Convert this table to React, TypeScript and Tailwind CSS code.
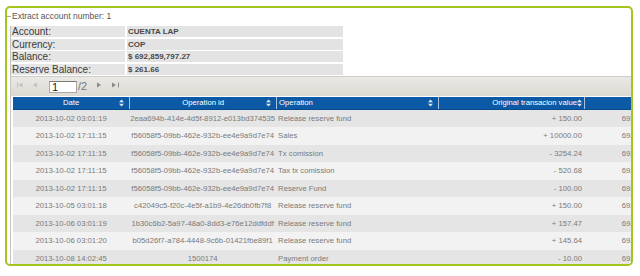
import React from "react";

const rows: string[][] = [
  ["2013-10-02 03:01:19", "2eaa694b-414e-4d5f-8912-e013bd374535", "Release reserve fund", "+ 150.00", "692,859,797.27"],
  ["2013-10-02 17:11:15", "f56058f5-09bb-462e-932b-ee4e9a9d7e74", "Sales", "+ 10000.00", "692,859,647.27"],
  ["2013-10-02 17:11:15", "f56058f5-09bb-462e-932b-ee4e9a9d7e74", "Tx comission", "- 3254.24", "692,849,647.27"],
  ["2013-10-02 17:11:15", "f56058f5-09bb-462e-932b-ee4e9a9d7e74", "Tax tx comission", "- 520.68", "692,852,901.51"],
  ["2013-10-02 17:11:15", "f56058f5-09bb-462e-932b-ee4e9a9d7e74", "Reserve Fund", "- 100.00", "692,853,422.19"],
  ["2013-10-05 03:01:18", "c42049c5-f20c-4e5f-a1b9-4e26db0fb7f8", "Release reserve fund", "+ 150.00", "692,853,522.19"],
  ["2013-10-06 03:01:19", "1b30c6b2-5a97-48a0-8dd3-e76e12ddfddf", "Release reserve fund", "+ 157.47", "692,853,372.19"],
  ["2013-10-06 03:01:20", "b05d26f7-a784-4448-9c6b-01421fbe89f1", "Release reserve fund", "+ 145.64", "692,853,214.72"],
  ["2013-10-08 14:02:45", "1500174", "Payment order", "- 10.00", "692,853,069.08"],
];

const info = [
  ["Account:", "CUENTA LAP"],
  ["Currency:", "COP"],
  ["Balance:", "$ 692,859,797.27"],
  ["Reserve Balance:", "$ 261.66"],
];

const Sort = () => (
  <svg width="5" height="8" viewBox="0 0 5 8" className="shrink-0">
    <path d="M2.5 0.5 L5 3.3 L0 3.3 Z" fill="#dce6f2" />
    <path d="M2.5 7.5 L5 4.7 L0 4.7 Z" fill="#dce6f2" />
  </svg>
);

const First = ({ c }: { c: string }) => (
  <svg width="6" height="6" viewBox="0 0 6 6">
    <rect x="0" y="0.5" width="1" height="5" fill={c} />
    <path d="M1.5 3 L5.5 0.5 L5.5 5.5 Z" fill={c} />
  </svg>
);

const Prev = ({ c }: { c: string }) => (
  <svg width="4" height="6" viewBox="0 0 4 6">
    <path d="M0 3 L4 0.5 L4 5.5 Z" fill={c} />
  </svg>
);

const Next = ({ c }: { c: string }) => (
  <svg width="4" height="6" viewBox="0 0 4 6">
    <path d="M4 3 L0 0.5 L0 5.5 Z" fill={c} />
  </svg>
);

const Last = ({ c }: { c: string }) => (
  <svg width="7" height="6" viewBox="0 0 7 6">
    <path d="M4 3 L0 0.5 L0 5.5 Z" fill={c} />
    <rect x="6" y="0.5" width="1" height="5" fill={c} />
  </svg>
);

export default function App() {
  return (
    <div className="w-[640px] h-[276px] bg-white overflow-hidden font-['Liberation_Sans',Arial,sans-serif]">
      <div className="ml-[5px] mt-[6px] w-[628px] h-[260px] border-2 border-[#a3c61c] rounded-[5px] overflow-hidden">
        <div className="flex items-center h-[12px] mt-[2px]">
          <span className="w-[4px] h-px bg-[#a8a8a8]" />
          <span className="ml-[1px] text-[8.5px] text-[#555] leading-none">Extract account number: 1</span>
        </div>
        <div className="ml-[3px] border-l border-[#c4c4c4] h-[300px]">
          <div className="mt-[4px] flex flex-col gap-[1.67px] w-[332px]">
            {info.map(([k, v]) => (
              <div key={k} className="flex h-[11px] gap-[2px]">
                <div className="w-[114px] bg-[#e5e5e5] text-[10px] leading-[11px] text-[#3a3a3a] pl-[1px]">{k}</div>
                <div className="w-[216px] bg-[#e3e3e3] text-[8px] font-bold leading-[11px] text-[#4a4a4a] pl-[1px]">{v}</div>
              </div>
            ))}
          </div>
          <div className="mt-[1px] h-[20px] bg-gradient-to-b from-[#ebe9e5] to-[#dcd9d3] border-t border-[#d0cdc7] flex items-center">
            <span className="ml-[6px] -mt-[2px] flex"><First c="#c2c2c2" /></span>
            <span className="ml-[10px] -mt-[2px] flex"><Prev c="#c2c2c2" /></span>
            <div className="ml-[12px] mt-[1px] w-[28px] h-[12px] bg-white border border-[#a9a9a9] border-t-[#7a7a7a] text-[11px] leading-[10px] text-[#222] pl-[2px]">1</div>
            <span className="ml-[1px] text-[11px] leading-none text-[#777]">/2</span>
            <span className="ml-[10px] -mt-[2px] flex"><Next c="#8a8a8a" /></span>
            <span className="ml-[11px] -mt-[2px] flex"><Last c="#8a8a8a" /></span>
          </div>
          <div className="ml-[2px] mt-[1px] w-[700px] text-[7.7px] leading-none">
            <div className="flex h-[13px] bg-[#0c5aa6] border-b border-[#084a8c] text-white items-center">
              <div className="w-[117px] relative flex items-center justify-center h-full">
                <span>Date</span>
                <span className="absolute right-[5px] top-[2.5px]"><Sort /></span>
              </div>
              <div className="w-[148px] relative flex items-center justify-center h-full border-l border-[#a9c2df]">
                <span>Operation id</span>
                <span className="absolute right-[5px] top-[2.5px]"><Sort /></span>
              </div>
              <div className="w-[163px] relative flex items-center h-full border-l border-[#a9c2df] pl-[2px]">
                <span>Operation</span>
                <span className="absolute right-[5px] top-[2.5px]"><Sort /></span>
              </div>
              <div className="w-[147px] flex items-center justify-end h-full border-l border-[#a9c2df] pr-[2px]">
                <span>Original transacion value</span>
                <Sort />
              </div>
              <div className="w-[130px] flex items-center justify-center h-full border-l border-[#a9c2df]">
                <span>Balance</span>
              </div>
            </div>
            {rows.map((r, i) => (
              <div
                key={i}
                className={`flex h-[17.5px] items-center text-[#7a7a7a] ${i % 2 === 0 ? "bg-[#e5e5e5]" : "bg-[#f2f2f2]"}`}
              >
                <div className="w-[117px] text-center">{r[0]}</div>
                <div className="w-[148px] text-center whitespace-nowrap">{r[1]}</div>
                <div className="w-[163px] pl-[2px]">{r[2]}</div>
                <div className="w-[147px] text-right pr-[2px]">{r[3]}</div>
                <div className="w-[130px] text-center">{r[4]}</div>
              </div>
            ))}
          </div>
        </div>
      </div>
    </div>
  );
}
